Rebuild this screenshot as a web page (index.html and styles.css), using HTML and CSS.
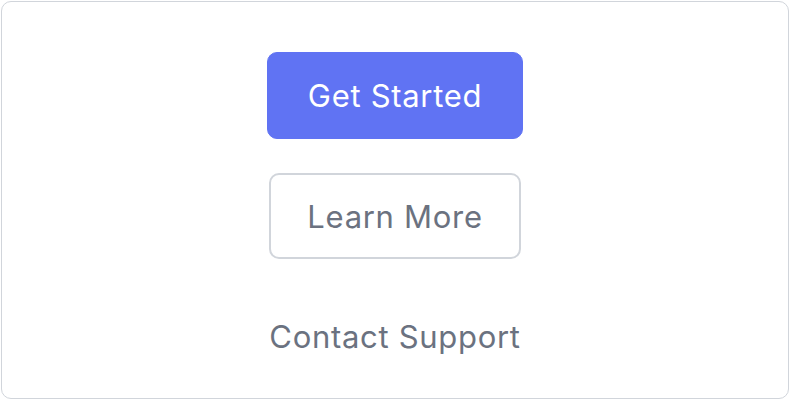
FILE: index.html
```html
<!DOCTYPE html>
<html lang="en">
<head>
    <meta charset="UTF-8">
    <meta name="viewport" content="width=device-width, initial-scale=1.0">
    <title>Actions</title>
    <link rel="stylesheet" href="styles.css">
</head>
<body>
    <div class="card">
        <button class="btn btn-primary">Get Started</button>
        <button class="btn btn-outline">Learn More</button>
        <a class="link" href="#">Contact Support</a>
    </div>
</body>
</html>
```

FILE: styles.css
```css
html, body {
    margin: 0;
    padding: 0;
    background-color: #ffffff;
}

body {
    padding: 1px;
    font-family: Inter, "Noto Sans", sans-serif;
}

.card {
    box-sizing: border-box;
    height: 398px;
    border: 1px solid #d1d5db;
    border-radius: 10px;
    display: flex;
    flex-direction: column;
    align-items: center;
    padding-top: 50px;
}

.btn {
    box-sizing: border-box;
    font-family: inherit;
    font-size: 31px;
    line-height: 37px;
    letter-spacing: 0.7px;
    text-align: center;
    padding: 0;
    border-radius: 10px;
    cursor: pointer;
}

.btn-primary {
    width: 256px;
    height: 87px;
    background-color: #6073f3;
    color: #ffffff;
    border: 1px solid #6073f3;
}

.btn-outline {
    width: 252px;
    height: 86px;
    margin-top: 34px;
    background-color: #ffffff;
    color: #6b7280;
    border: 2px solid #d1d5db;
}

.link {
    margin-top: 59px;
    font-size: 31px;
    line-height: 37px;
    letter-spacing: 0.7px;
    color: #6b7280;
    text-decoration: none;
}
```
